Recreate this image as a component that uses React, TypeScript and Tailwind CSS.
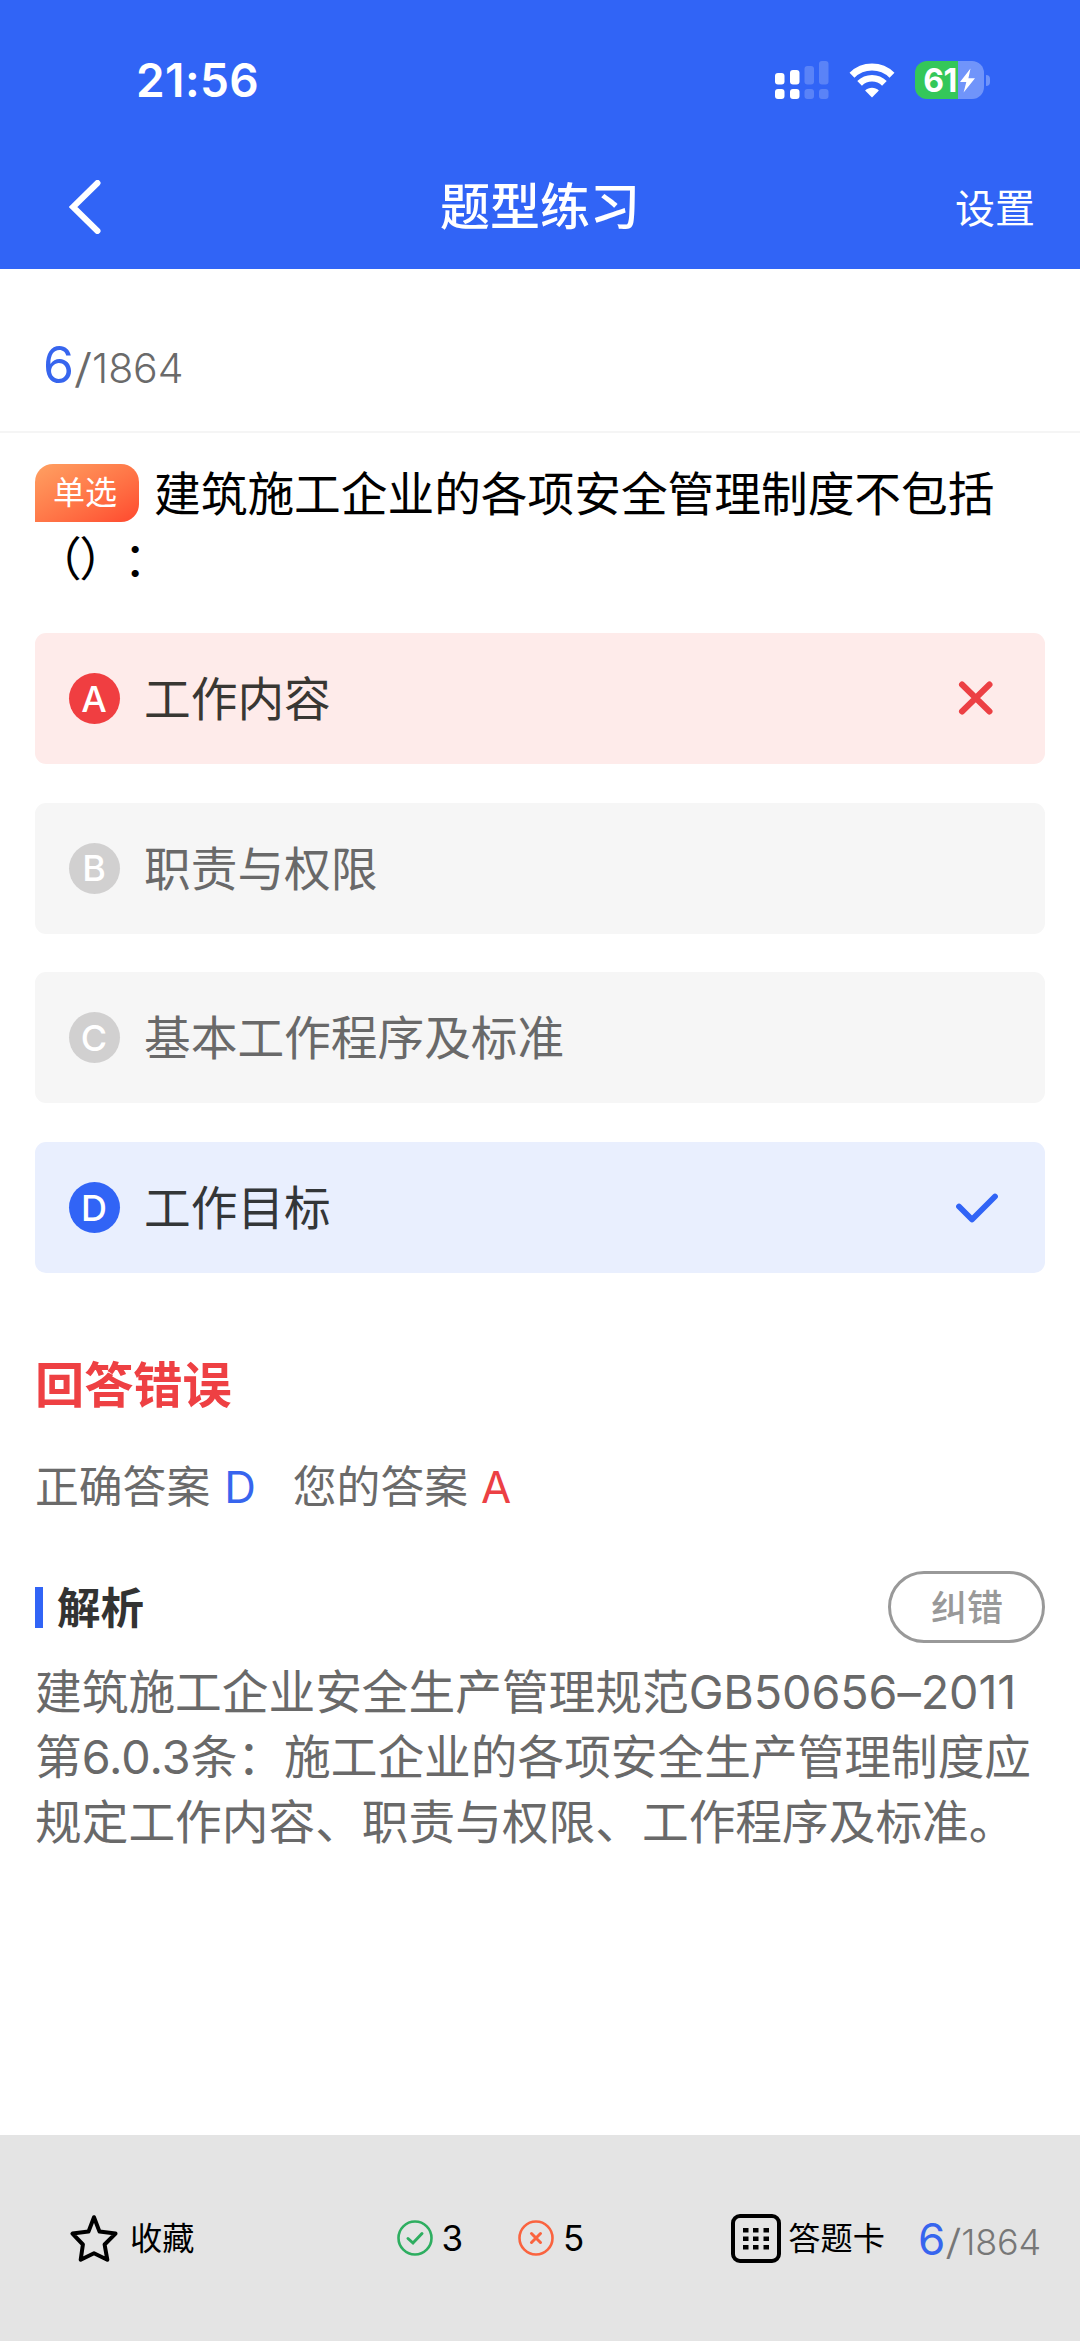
import clsx from "clsx";

type OptionStatus = "wrong" | "correct" | "idle";

interface Option {
  label: string;
  text: string;
  status: OptionStatus;
}

const options: Option[] = [
  { label: "A", text: "工作内容", status: "wrong" },
  { label: "B", text: "职责与权限", status: "idle" },
  { label: "C", text: "基本工作程序及标准", status: "idle" },
  { label: "D", text: "工作目标", status: "correct" },
];

const explanation = [
  <>建筑施工企业安全生产管理规范<span className="tracking-[-0.1px]">GB50656–2011</span></>,
  <>第6.0.3条：施工企业的各项安全生产管理制度应</>,
  <>规定工作内容、职责与权限、工作程序及标准。</>,
];

const SignalIcon = () => (
  <svg width="54" height="38" viewBox="0 0 54 38" fill="#fff">
    <rect x="0" y="12" width="9.5" height="11.5" rx="3" />
    <rect x="0" y="28" width="9.5" height="10" rx="3" />
    <rect x="15" y="9" width="9.5" height="14.5" rx="3" />
    <rect x="15" y="28" width="9.5" height="10" rx="3" />
    <g opacity="0.2">
      <rect x="29.5" y="5" width="9.5" height="18.5" rx="3" />
      <rect x="29.5" y="28" width="9.5" height="10" rx="3" />
      <rect x="44" y="0" width="9.5" height="23.5" rx="3" />
      <rect x="44" y="28" width="9.5" height="10" rx="3" />
    </g>
  </svg>
);

const WifiIcon = () => (
  <svg width="46" height="35" viewBox="0 0 46 35" fill="none">
    <path d="M3 12.2a28.5 28.5 0 0 1 40 0" stroke="#fff" strokeWidth="7" />
    <path d="M10.6 20.3a17.6 17.6 0 0 1 24.8 0" stroke="#fff" strokeWidth="6.6" />
    <path d="M23 34.5l-6.9-7.1c3.9-3.4 9.9-3.4 13.8 0z" fill="#fff" />
  </svg>
);

const Battery = () => (
  <div className="flex items-center gap-[2px]">
    <div className="flex h-[38px] w-[69px] items-center justify-center overflow-hidden rounded-[12px] bg-linear-to-r from-[#34c759] from-62% to-[#7094fa] to-62%">
      <span className="pt-px text-[32px] leading-none font-bold tracking-[-0.5px] text-white">61</span>
      <svg width="17" height="25" viewBox="0 0 17 25" fill="#fff" className="ml-[2px] shrink-0">
        <path d="M11.5.5 1 14h6.3L4.6 24.5 16 10.3H9.4z" />
      </svg>
    </div>
    <div className="h-[11px] w-[4px] rounded-r-full bg-[#7094fa]" />
  </div>
);

const Header = () => (
  <header className="h-[269px] bg-[#3164f6] text-white">
    <div className="flex h-[145px] items-center pt-[15px] pr-[90px] pl-[136px]">
      <span className="text-[46px] font-semibold tracking-[0.4px]">21:56</span>
      <div className="ml-auto flex items-center">
        <SignalIcon />
        <div className="ml-[20px]">
          <WifiIcon />
        </div>
        <div className="ml-[20px]">
          <Battery />
        </div>
      </div>
    </div>
    <div className="grid h-[124px] grid-cols-3 items-center px-[45px]">
      <svg width="32" height="54" viewBox="0 0 32 54" fill="none" className="ml-[24px]">
        <path d="M28.5 3 4 27l24.5 24" stroke="#fff" strokeWidth="6" strokeLinecap="round" strokeLinejoin="miter" />
      </svg>
      <h1 className="pt-px text-center text-[50px] font-medium">题型练习</h1>
      <button className="pt-[4px] text-right text-[40px]">设置</button>
    </div>
  </header>
);

const Badge = ({ label, status }: { label: string; status: OptionStatus }) => (
  <span
    className={clsx(
      "flex size-[51px] items-center justify-center rounded-full pr-px text-[36px] leading-none font-medium text-white",
      status === "wrong" && "bg-[#f03e41]",
      status === "correct" && "bg-[#3164f6]",
      status === "idle" && "bg-[#d1d0d0]"
    )}
  >
    {label}
  </span>
);

const OptionRow = ({ option }: { option: Option }) => (
  <li
    className={clsx(
      "flex h-[131px] items-center rounded-[11px] pr-[46px] pl-[34px]",
      option.status === "wrong" && "bg-[#feebea] text-[#393733]",
      option.status === "correct" && "bg-[#e9effe] text-[#333638]",
      option.status === "idle" && "bg-[#f6f6f6] text-[#696969]"
    )}
  >
    <Badge label={option.label} status={option.status} />
    <span className="ml-[24px] pt-px text-[46.7px]">{option.text}</span>
    {option.status === "wrong" && (
      <svg width="48" height="48" viewBox="0 0 48 48" className="ml-auto" fill="none">
        <path d="M11 9.5 38.5 36.5M38.5 9.5 11 36.5" stroke="#ec4044" strokeWidth="6" strokeLinecap="round" />
      </svg>
    )}
    {option.status === "correct" && (
      <svg width="48" height="48" viewBox="0 0 48 48" className="ml-auto" fill="none">
        <path d="M8 22.5 21 35.5 44 12.5" stroke="#3164f6" strokeWidth="5.8" strokeLinecap="round" strokeLinejoin="round" />
      </svg>
    )}
  </li>
);

const StarIcon = () => (
  <svg width="48" height="48" viewBox="0 0 48 48" fill="none">
    <path
      d="M24 3.2 29.5 17.6 45.5 19.6 34.6 30.5 37.3 45.7 24 39.3 10.7 45.7 12.9 30.5 2.5 19.6 18.5 17.6Z"
      stroke="#000"
      strokeWidth="4"
      strokeLinejoin="round"
    />
  </svg>
);

const CardIcon = () => (
  <svg width="50" height="49" viewBox="0 0 50 49" fill="none">
    <rect x="2" y="2" width="46" height="45" rx="7" stroke="#000" strokeWidth="4" />
    {[14, 22.5, 31].map((y) =>
      [12, 22, 32.5].map((x) => <rect key={`${x}-${y}`} x={x} y={y} width="5.5" height="4.5" fill="#000" />)
    )}
  </svg>
);

const BottomBar = () => (
  <footer className="flex h-[206px] items-center bg-[#e4e4e4] pr-[39px] pl-[70px] text-[32.2px] text-black">
    <StarIcon />
    <span className="ml-[12px] pt-[2px]">收藏</span>
    <svg width="36" height="36" viewBox="0 0 36 36" fill="none" stroke="#2eae60" className="ml-[203px]">
      <circle cx="18" cy="18" r="16.5" strokeWidth="2.6" />
      <path d="m11 18.5 5 4.5 9-9.5" strokeWidth="3" strokeLinecap="round" />
    </svg>
    <span className="ml-[8px] text-[35px]">3</span>
    <svg width="36" height="36" viewBox="0 0 36 36" fill="none" stroke="#fa633f" className="ml-[55px]">
      <circle cx="18" cy="18" r="16.5" strokeWidth="2.6" />
      <path d="m13.5 13.5 9 9m0-9-9 9" strokeWidth="3" strokeLinecap="round" />
    </svg>
    <span className="ml-[9px] text-[35px]">5</span>
    <div className="ml-auto flex items-center">
      <CardIcon />
      <span className="ml-[7px] pt-[2px]">答题卡</span>
      <span className="ml-[33px] pt-px text-[36px] font-[350] tracking-[-0.2px] text-[#777]">
        <span className="text-[44px] font-normal text-[#3765ee]">6</span>
        <span className="mr-[2px] ml-[2px] inline-block origin-center scale-x-130">/</span>1864
      </span>
    </div>
  </footer>
);

const App = () => {
  return (
    <div className="flex h-[2341px] w-[1080px] flex-col overflow-hidden bg-white font-[Inter,'Noto_Sans_CJK_SC',sans-serif] [text-spacing-trim:space-all]">
      <Header />

      <div className="flex h-[164px] items-center border-b-2 border-[#f5f5f5] pt-[30px] pl-[43px] text-[41px] font-[350] tracking-[-0.1px] text-[#6a6a6a]">
        <span>
          <span className="text-[50px] font-normal text-[#3765ee]">6</span>
          <span className="mr-[2px] ml-[2px] inline-block origin-center scale-x-130">/</span>1864
        </span>
      </div>

      <main className="flex-1 px-[35px]">
        <div className="mt-[29px] text-[46.7px] leading-[65px] text-black">
          <div className="flex items-center">
            <span className="mb-[4px] flex h-[58px] w-[104px] items-center justify-center rounded-[18px] rounded-bl-none bg-linear-to-br from-[#ffa062] to-[#ff472e] pr-[4px] text-[32px] text-white">
              单选
            </span>
            <span className="ml-[15px] whitespace-nowrap">建筑施工企业的各项安全管理制度不包括</span>
          </div>
          <p className="tracking-[-2.5px]">（）：</p>
        </div>

        <ul className="mt-[41px] flex flex-col gap-[38.7px]">
          {options.map((option) => (
            <OptionRow key={option.label} option={option} />
          ))}
        </ul>

        <h2 className="mt-[79px] text-[49.2px] leading-[66px] font-bold text-[#ee4043]">回答错误</h2>
        <div className="mt-[40px] flex text-[43.8px] leading-[60px] text-[#6a6a6a]">
          <span>正确答案</span>
          <span className="ml-[14px] text-[#3765ee]">D</span>
          <span className="ml-[37px]">您的答案</span>
          <span className="ml-[13px] text-[#ec4044]">A</span>
        </div>

        <div className="mt-[53px] flex h-[72px] items-center">
          <span className="h-[41px] w-[8px] bg-[#3164f6]" />
          <h3 className="ml-[14px] pt-[3px] text-[43.5px] font-bold text-[#333]">解析</h3>
          <button className="ml-auto flex h-[72px] w-[157px] items-center justify-center rounded-full border-3 border-[#999] pt-px pl-px text-[36px] font-medium text-[#999]">
            纠错
          </button>
        </div>

        <div className="mt-[17px] text-[46.7px] leading-[65px] whitespace-nowrap text-[#696969]">
          {explanation.map((line, index) => (
            <p key={index}>{line}</p>
          ))}
        </div>
      </main>

      <BottomBar />
    </div>
  );
};

export default App;
